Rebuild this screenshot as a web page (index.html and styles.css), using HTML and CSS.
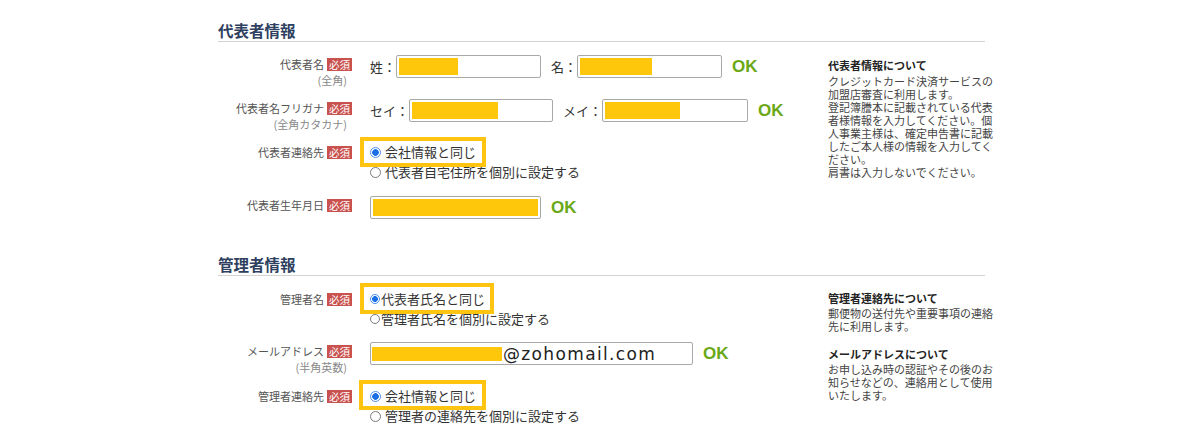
FILE: index.html
```html
<!DOCTYPE html>
<html lang="ja">
<head>
<meta charset="utf-8">
<title>代表者情報・管理者情報</title>
<link rel="stylesheet" href="styles.css">
</head>
<body>
<div class="page">
  <section class="sec">
    <h2 class="sec-title">代表者情報</h2>
    <div class="sec-body">
      <div class="fields">
        <div class="row r-first">
          <div class="label"><div class="label-main">代表者名<span class="req">必須</span></div><div class="label-sub">(全角)</div></div>
          <div class="ctrl">
            <span class="pfx">姓：</span><span class="input w145"><span class="mask m59"></span></span>
            <span class="pfx gap">名：</span><span class="input w145"><span class="mask m72"></span></span>
            <span class="ok">OK</span>
          </div>
        </div>
        <div class="row r-kana">
          <div class="label"><div class="label-main">代表者名フリガナ<span class="req">必須</span></div><div class="label-sub">(全角カタカナ)</div></div>
          <div class="ctrl">
            <span class="pfx">セイ：</span><span class="input w144"><span class="mask m86"></span></span>
            <span class="pfx gap">メイ：</span><span class="input w146"><span class="mask m75"></span></span>
            <span class="ok">OK</span>
          </div>
        </div>
        <div class="row r-contact">
          <div class="label radio-label"><div class="label-main">代表者連絡先<span class="req">必須</span></div></div>
          <div class="ctrl radios">
            <div class="opt hl hl-a"><span class="radio on"></span><span class="opt-text">会社情報と同じ</span></div>
            <div class="opt"><span class="radio"></span><span class="opt-text">代表者自宅住所を個別に設定する</span></div>
          </div>
        </div>
        <div class="row r-birth">
          <div class="label"><div class="label-main">代表者生年月日<span class="req">必須</span></div></div>
          <div class="ctrl">
            <span class="input w171"><span class="mask mfull"></span></span>
            <span class="ok">OK</span>
          </div>
        </div>
      </div>
      <aside class="info info-rep">
        <h3 class="info-title">代表者情報について</h3>
        <p class="info-text">クレジットカード決済サービスの<br>加盟店審査に利用します。<br>登記簿謄本に記載されている代表<br>者様情報を入力してください。個<br>人事業主様は、確定申告書に記載<br>したご本人様の情報を入力してく<br>ださい。<br>肩書は入力しないでください。</p>
      </aside>
    </div>
  </section>

  <section class="sec sec-admin">
    <h2 class="sec-title">管理者情報</h2>
    <div class="sec-body">
      <div class="fields">
        <div class="row r-first">
          <div class="label radio-label"><div class="label-main">管理者名<span class="req">必須</span></div></div>
          <div class="ctrl radios">
            <div class="opt tight hl hl-b"><span class="radio on"></span><span class="opt-text">代表者氏名と同じ</span></div>
            <div class="opt tight"><span class="radio"></span><span class="opt-text">管理者氏名を個別に設定する</span></div>
          </div>
        </div>
        <div class="row r-mail">
          <div class="label"><div class="label-main">メールアドレス<span class="req">必須</span></div><div class="label-sub">(半角英数)</div></div>
          <div class="ctrl">
            <span class="input w323 mail"><span class="mask-mail"></span><span class="mail-text">@zohomail.com</span></span>
            <span class="ok">OK</span>
          </div>
        </div>
        <div class="row r-admin-contact">
          <div class="label radio-label"><div class="label-main">管理者連絡先<span class="req">必須</span></div></div>
          <div class="ctrl radios">
            <div class="opt hl hl-c"><span class="radio on"></span><span class="opt-text">会社情報と同じ</span></div>
            <div class="opt"><span class="radio"></span><span class="opt-text">管理者の連絡先を個別に設定する</span></div>
          </div>
        </div>
      </div>
      <aside class="info info-admin">
        <h3 class="info-title">管理者連絡先について</h3>
        <p class="info-text">郵便物の送付先や重要事項の連絡<br>先に利用します。</p>
        <h3 class="info-title second">メールアドレスについて</h3>
        <p class="info-text">お申し込み時の認証やその後のお<br>知らせなどの、連絡用として使用<br>いたします。</p>
      </aside>
    </div>
  </section>
</div>
</body>
</html>
```
FILE: styles.css
```css
* { box-sizing: border-box; }

body {
  margin: 0;
  background: #fff;
  font-family: "Noto Sans CJK JP", "Noto Sans", sans-serif;
  color: #333;
}

.page {
  width: 767px;
  margin-left: 218px;
  padding-top: 19px;
}

.sec-title {
  margin: 0;
  font-size: 15.5px;
  line-height: 22px;
  font-weight: 700;
  color: #2f3f5f;
  border-bottom: 1px solid #d2d2d2;
}

.sec-admin { margin-top: 34px; }

.sec-body {
  display: grid;
  grid-template-columns: 610px 157px;
}

.row {
  display: grid;
  grid-template-columns: 134px 1fr;
  column-gap: 8px;
  align-items: start;
}

.sec .r-first { margin-top: 13px; }
.r-kana { margin-top: 11px; }
.r-contact { margin-top: 10px; }
.r-birth { margin-top: 14px; }
.r-mail { margin-top: 13px; }
.r-admin-contact { margin-top: 11px; }

.label {
  text-align: right;
  padding-top: 1px;
}

.label-main {
  display: flex;
  justify-content: flex-end;
  align-items: center;
  font-size: 11px;
  line-height: 16px;
  color: #555;
}

.radio-label { padding-top: 0; }
.radio-label .label-main { line-height: 20px; }

.req {
  margin-left: 3px;
  padding: 0 2px;
  background: #c9514e;
  color: #fff;
  font-size: 10.5px;
  line-height: 13px;
}

.label-sub {
  margin-right: 5px;
  font-size: 11px;
  line-height: 16px;
  color: #888;
}

.ctrl {
  display: flex;
  align-items: center;
  padding-left: 10px;
  height: 23px;
}

.pfx {
  font-size: 13px;
  color: #333;
  white-space: nowrap;
}

.pfx.gap { margin-left: 10px; }

.input {
  display: flex;
  align-items: center;
  height: 23px;
  padding: 2px;
  border: 1px solid #a8a8a8;
  border-radius: 2px;
  background: #fff;
}

.w144 { width: 144px; }
.w145 { width: 145px; }
.w146 { width: 146px; }
.w171 { width: 171px; }
.w323 { width: 323px; }

.mask {
  display: block;
  height: 100%;
  background: #ffc70b;
}

.m59 { width: 59px; }
.m72 { width: 72px; }
.m86 { width: 86px; }
.m75 { width: 75px; }
.mfull { width: 100%; }

.mail { padding: 0 1px; }

.mask-mail {
  display: block;
  width: 130px;
  height: 14px;
  background: #ffc70b;
}

.mail-text {
  margin-left: 1px;
  font-family: "DejaVu Sans", sans-serif;
  font-size: 17px;
  letter-spacing: 1.35px;
  color: #222;
  line-height: 20px;
}

.ok {
  margin-left: 10px;
  font-family: "Liberation Sans", Arial, sans-serif;
  font-weight: 700;
  font-size: 17px;
  color: #6aa817;
}

.radios {
  display: flex;
  flex-direction: column;
  align-items: flex-start;
  height: auto;
}

.opt {
  position: relative;
  display: flex;
  align-items: center;
  font-size: 13px;
  line-height: 20px;
  color: #333;
  white-space: nowrap;
}

.radio {
  width: 11px;
  height: 11px;
  margin-right: 4px;
  border: 1px solid #7a7a7a;
  border-radius: 50%;
  background: #fff;
}

.radio.on {
  border-color: #4c8ff0;
  background: radial-gradient(circle, #1a6fe6 0 3px, #fff 3.6px);
}

.opt.tight .radio {
  width: 10px;
  height: 10px;
  margin-right: 1px;
}

.opt.tight .radio.on {
  background: radial-gradient(circle, #1a6fe6 0 2.6px, #fff 3.2px);
}

.hl::before {
  content: "";
  position: absolute;
  border: 4px solid #ffc40f;
  z-index: 2;
  pointer-events: none;
}

.hl-a::before { top: -5px; bottom: -5px; left: -10px; right: -10px; }
.hl-b::before { top: -6px; bottom: -5px; left: -10px; right: -9px; }
.hl-c::before { top: -6px; bottom: -4px; left: -11px; right: -10px; }

.info {
  white-space: nowrap;
}

.info-title {
  margin: 0;
  font-size: 11px;
  line-height: 16px;
  font-weight: 700;
  color: #222;
}

.info-rep .info-title { margin-top: 15px; }
.info-admin .info-title { margin-top: 14px; }
.info-admin .info-title.second { margin-top: 13px; }

.info-text {
  margin: 2px 0 0;
  font-size: 11px;
  line-height: 13px;
  color: #444;
}

.info-admin .info-text { margin-top: 1px; }
```
